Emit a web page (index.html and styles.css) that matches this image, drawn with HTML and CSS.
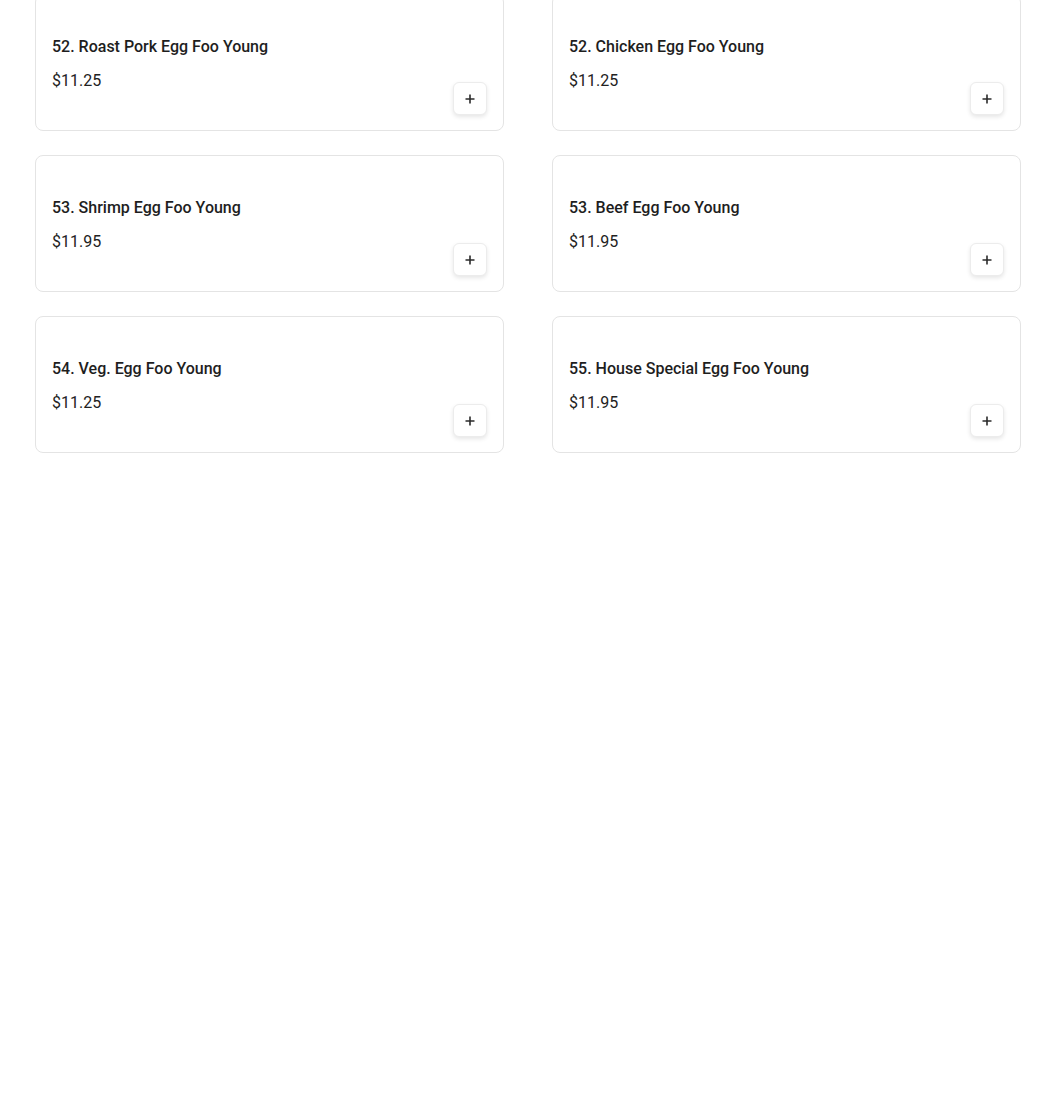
FILE: index.html
```html
<!DOCTYPE html>
<html lang="en">
<head>
<meta charset="utf-8">
<title>Egg Foo Young</title>
<link rel="stylesheet" href="styles.css">
</head>
<body>
<main class="menu">
  <div class="grid">
    <div class="card">
      <div class="info"><div class="name">52. Roast Pork Egg Foo Young</div><div class="price">$11.25</div></div>
      <button class="add" aria-label="Add"><svg viewBox="0 0 12 12" width="12" height="12"><path d="M6 1.5v9M1.5 6h9" stroke="#2b2b2b" stroke-width="1.6" fill="none"/></svg></button>
    </div>
    <div class="card">
      <div class="info"><div class="name">52. Chicken Egg Foo Young</div><div class="price">$11.25</div></div>
      <button class="add" aria-label="Add"><svg viewBox="0 0 12 12" width="12" height="12"><path d="M6 1.5v9M1.5 6h9" stroke="#2b2b2b" stroke-width="1.6" fill="none"/></svg></button>
    </div>
    <div class="card">
      <div class="info"><div class="name">53. Shrimp Egg Foo Young</div><div class="price">$11.95</div></div>
      <button class="add" aria-label="Add"><svg viewBox="0 0 12 12" width="12" height="12"><path d="M6 1.5v9M1.5 6h9" stroke="#2b2b2b" stroke-width="1.6" fill="none"/></svg></button>
    </div>
    <div class="card">
      <div class="info"><div class="name">53. Beef Egg Foo Young</div><div class="price">$11.95</div></div>
      <button class="add" aria-label="Add"><svg viewBox="0 0 12 12" width="12" height="12"><path d="M6 1.5v9M1.5 6h9" stroke="#2b2b2b" stroke-width="1.6" fill="none"/></svg></button>
    </div>
    <div class="card">
      <div class="info"><div class="name">54. Veg. Egg Foo Young</div><div class="price">$11.25</div></div>
      <button class="add" aria-label="Add"><svg viewBox="0 0 12 12" width="12" height="12"><path d="M6 1.5v9M1.5 6h9" stroke="#2b2b2b" stroke-width="1.6" fill="none"/></svg></button>
    </div>
    <div class="card">
      <div class="info"><div class="name">55. House Special Egg Foo Young</div><div class="price">$11.95</div></div>
      <button class="add" aria-label="Add"><svg viewBox="0 0 12 12" width="12" height="12"><path d="M6 1.5v9M1.5 6h9" stroke="#2b2b2b" stroke-width="1.6" fill="none"/></svg></button>
    </div>
  </div>
</main>
</body>
</html>
```

FILE: styles.css
```css
html, body {
  margin: 0;
  padding: 0;
  background: #ffffff;
}
body {
  font-family: Roboto, "Liberation Sans", Arial, sans-serif;
  color: #1f1f1f;
}
.menu {
  padding: 0 29px 0 35px;
}
.grid {
  margin-top: -6px;
  display: grid;
  grid-template-columns: 469px 469px;
  column-gap: 48px;
  row-gap: 24px;
}
.card {
  box-sizing: border-box;
  height: 137px;
  border: 1px solid #e4e4e4;
  border-radius: 8px;
  padding: 16px;
  display: flex;
  justify-content: space-between;
  align-items: flex-end;
  background: #fff;
}
.info {
  align-self: flex-start;
  padding-top: 24px;
}
.name {
  font-size: 16px;
  font-weight: 500;
  line-height: 24px;
  color: #1e1e1e;
}
.price {
  margin-top: 10px;
  font-size: 16px;
  font-weight: 400;
  line-height: 24px;
  color: #222;
}
.add {
  box-sizing: border-box;
  width: 34px;
  height: 33px;
  margin: 0 0 -1px 0;
  padding: 0;
  border: 1px solid #ececec;
  border-radius: 6px;
  background: #fff;
  box-shadow: 0 2px 4px rgba(0, 0, 0, 0.10);
  display: flex;
  align-items: center;
  justify-content: center;
  cursor: pointer;
}
.add svg {
  display: block;
}
```
